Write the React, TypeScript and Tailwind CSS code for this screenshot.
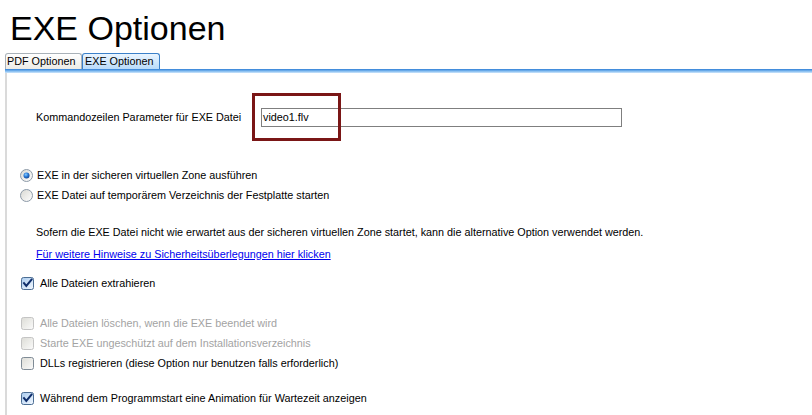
import React from 'react';

function Radio({ checked }: { checked?: boolean }) {
  return (
    <svg width="13" height="13" viewBox="0 0 13 13" className="shrink-0">
      <defs>
        <linearGradient id={checked ? 'rg1' : 'rg0'} x1="0" y1="0" x2="1" y2="1">
          <stop offset="0" stopColor="#d8d8d2" />
          <stop offset="1" stopColor="#ffffff" />
        </linearGradient>
        <radialGradient id="dot" cx="0.4" cy="0.35" r="0.7">
          <stop offset="0" stopColor="#8ad0ff" />
          <stop offset="0.5" stopColor="#2a7ad8" />
          <stop offset="1" stopColor="#10408a" />
        </radialGradient>
      </defs>
      <circle cx="6.5" cy="6.5" r="6" fill={`url(#${checked ? 'rg1' : 'rg0'})`} stroke="#8d9aa8" strokeWidth="1" />
      {checked && <circle cx="6.5" cy="6.5" r="3" fill="url(#dot)" />}
    </svg>
  );
}

function Check({ checked, disabled }: { checked?: boolean; disabled?: boolean }) {
  return (
    <svg width="13" height="13" viewBox="0 0 13 13" className="shrink-0">
      <defs>
        <linearGradient id="cbOn" x1="0" y1="0" x2="1" y2="1">
          <stop offset="0" stopColor="#a9cbef" />
          <stop offset="1" stopColor="#f4f9ff" />
        </linearGradient>
        <linearGradient id="cbOff" x1="0" y1="0" x2="1" y2="1">
          <stop offset="0" stopColor="#dcdcd6" />
          <stop offset="1" stopColor="#fbfbfb" />
        </linearGradient>
      </defs>
      <rect
        x="0.5"
        y="0.5"
        width="12"
        height="12"
        rx="2"
        fill={checked ? 'url(#cbOn)' : 'url(#cbOff)'}
        stroke={checked ? '#4b6d93' : disabled ? '#c4c4c4' : '#7f8b96'}
      />
      {checked && (
        <path d="M3 6.2 L5.3 9 L10.5 2.6" fill="none" stroke="#0f2e6b" strokeWidth="2" strokeLinecap="square" />
      )}
    </svg>
  );
}

export default function App() {
  return (
    <div className="relative w-[812px] h-[415px] overflow-hidden bg-white text-black font-['Liberation_Sans',Arial,sans-serif] text-[10.8px]">
      <h1 className="pl-[10px] pt-[11px] text-[34px] leading-[34px] font-normal">EXE Optionen</h1>

      <div className="mt-[8px] ml-[5px] flex h-[16px] items-stretch">
        <div className="w-[77px] pl-[1px] leading-[15px] border border-b-0 border-[#a9b1b8] rounded-t-[3px] bg-gradient-to-b from-white to-[#ecebe6]">
          PDF Optionen
        </div>
        <div className="w-[78px] pl-[2px] leading-[15px] border border-b-0 border-[#3b80c9] rounded-t-[3px] bg-gradient-to-b from-[#eaf5ff] to-[#b9dbfa]">
          EXE Optionen
        </div>
      </div>
      <div className="ml-[5px] h-[4px] bg-gradient-to-b from-[#2f7fd6] via-[#7ab7ee] to-[#cfe6fb]" />

      <div className="ml-[5px] h-[342px] border-l-2 border-[#dadada]">
        <div className="pt-[35px] flex items-center h-[54px]">
          <span className="pl-[29px] w-[254px]">Kommandozeilen Parameter für EXE Datei</span>
          <div className="w-[361px] h-[19px] border border-[#7f7f7f] pl-[1px] leading-[17px]">video1.flv</div>
        </div>

        <div className="mt-[38px] flex flex-col">
          <label className="h-[20px] flex items-center pl-[13px] gap-[4px]">
            <Radio checked />
            <span>EXE in der sicheren virtuellen Zone ausführen</span>
          </label>
          <label className="h-[20px] flex items-center pl-[13px] gap-[4px]">
            <Radio />
            <span>EXE Datei auf temporärem Verzeichnis der Festplatte starten</span>
          </label>
        </div>

        <p className="mt-[17px] pl-[29px] leading-[20px]">
          Sofern die EXE Datei nicht wie erwartet aus der sicheren virtuellen Zone startet, kann die alternative Option verwendet werden.
        </p>
        <p className="mt-[2px] pl-[29px] leading-[20px]">
          <a className="text-[#0000ee] underline">Für weitere Hinweise zu Sicherheitsüberlegungen hier klicken</a>
        </p>

        <label className="mt-[9px] h-[20px] flex items-center pl-[14px] gap-[6px]">
          <Check checked />
          <span>Alle Dateien extrahieren</span>
        </label>

        <div className="mt-[20px] flex flex-col">
          <label className="h-[20px] flex items-center pl-[14px] gap-[6px] text-[#a3a3a3]">
            <Check disabled />
            <span>Alle Dateien löschen, wenn die EXE beendet wird</span>
          </label>
          <label className="h-[20px] flex items-center pl-[14px] gap-[6px] text-[#a3a3a3]">
            <Check disabled />
            <span>Starte EXE ungeschützt auf dem Installationsverzeichnis</span>
          </label>
          <label className="h-[20px] flex items-center pl-[14px] gap-[6px]">
            <Check />
            <span>DLLs registrieren (diese Option nur benutzen falls erforderlich)</span>
          </label>
        </div>

        <label className="mt-[15px] h-[20px] flex items-center pl-[14px] gap-[6px]">
          <Check checked />
          <span>Während dem Programmstart eine Animation für Wartezeit anzeigen</span>
        </label>
      </div>

      <div className="absolute left-[252px] top-[93px] w-[89px] h-[48px] border-[3px] border-[#7a1616]" />
    </div>
  );
}
